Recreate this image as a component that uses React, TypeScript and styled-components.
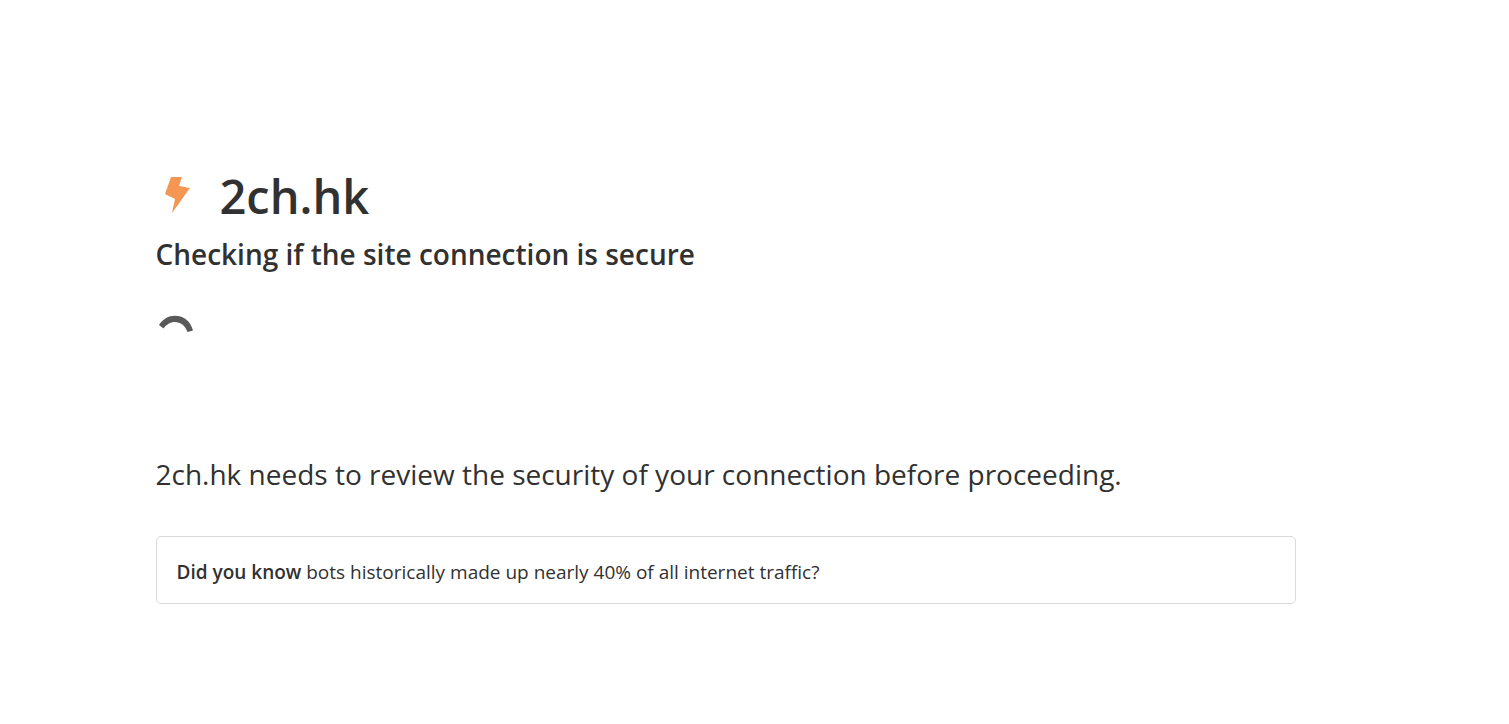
import React from "react";
import styled, { createGlobalStyle } from "styled-components";

const GlobalStyle = createGlobalStyle`
  * { box-sizing: border-box; margin: 0; padding: 0; }
  body {
    margin: 0;
    background: #fff;
    color: #313131;
    font-family: "Open Sans", "Noto Sans", sans-serif;
  }
`;

const Main = styled.main`
  width: 100%;
  max-width: 1200px;
  margin: 160px auto 0;
  padding: 0 59px 0 1px;
`;

const TitleRow = styled.div`
  display: flex;
  align-items: center;
  height: 72px;
`;

const BoltIcon = styled.svg`
  width: 40px;
  height: 40px;
  margin-right: 24px;
`;

const Title = styled.h1`
  font-size: 47px;
  font-weight: 600;
  line-height: 72px;
`;

const Subtitle = styled.h2`
  font-size: 28px;
  font-weight: 600;
  line-height: 44px;
`;

const Spinner = styled.svg`
  display: block;
  width: 40px;
  height: 40px;
  margin: 38px 0 98px;
`;

const Message = styled.p`
  font-size: 28px;
  line-height: 44px;
`;

const Fact = styled.p`
  margin-top: 40px;
  padding: 22px 20px 18px;
  border: 1px solid #d9d9d9;
  border-radius: 5px;
  font-size: 19px;
  line-height: 26px;
`;

const Strong = styled.strong`
  font-weight: 600;
`;

export default function App() {
  return (
    <>
      <GlobalStyle />
      <Main>
        <TitleRow>
          <BoltIcon viewBox="0 0 40 40" aria-hidden="true">
            <path d="M15 1H26L23 10L34 12L16 37L19 23L9 18Z" fill="#f69653" />
          </BoltIcon>
          <Title>2ch.hk</Title>
        </TitleRow>
        <Subtitle>Checking if the site connection is secure</Subtitle>
        <Spinner viewBox="0 0 40 40" role="img" aria-label="Loading">
          <path d="M3 11C7 5 12.500 1.800 19 1.800C28 1.800 34.500 7.500 37 16.500L31.500 18C29 11.500 25 8 18.500 8C14.500 8 10.500 10.500 7.500 14.500Z" fill="#595959" />
        </Spinner>
        <Message>2ch.hk needs to review the security of your connection before proceeding.</Message>
        <Fact>
          <Strong>Did you know</Strong> bots historically made up nearly 40% of all internet traffic?
        </Fact>
      </Main>
    </>
  );
}
